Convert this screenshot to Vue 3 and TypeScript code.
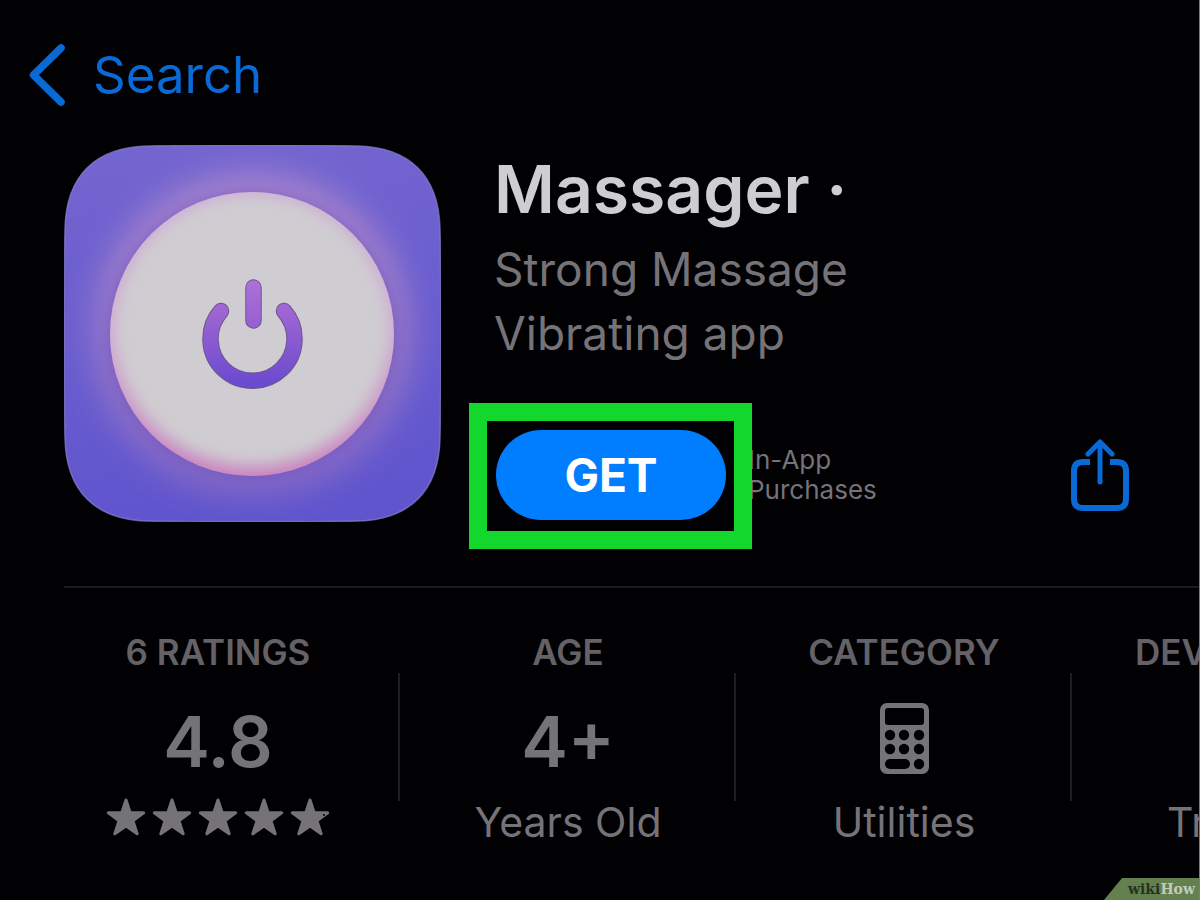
<script setup lang="ts">
const stars: number[] = [1, 2, 3, 4, 5]
const keys: { x: number; y: number }[] = [
  { x: 10, y: 32 }, { x: 24, y: 32 }, { x: 39, y: 32 },
  { x: 10, y: 46 }, { x: 24, y: 46 }, { x: 39, y: 46 },
  { x: 39, y: 61 },
]
</script>

<template>
  <main class="page">
    <nav class="nav">
      <a class="back" href="#search">
        <svg class="chevron" viewBox="0 0 38 64" aria-hidden="true">
          <path d="M33 6 5.500 33 33 60" fill="none" stroke="currentColor" stroke-width="7.500" stroke-linecap="round" stroke-linejoin="round" />
        </svg>
        <span>Search</span>
      </a>
    </nav>

    <section class="hero">
      <svg class="app-icon" viewBox="0 0 377 377" role="img" aria-label="Massager icon">
        <defs>
          <linearGradient id="base" x1="0" y1="0" x2="0.1" y2="1">
            <stop offset="0" stop-color="#7466cf" />
            <stop offset="0.5" stop-color="#695dd0" />
            <stop offset="1" stop-color="#6055cd" />
          </linearGradient>
          <linearGradient id="halo" x1="0" y1="0" x2="0" y2="1">
            <stop offset="0" stop-color="#a583ce" />
            <stop offset="0.5" stop-color="#9375c8" />
            <stop offset="1" stop-color="#8467c6" />
          </linearGradient>
          <linearGradient id="rim" x1="0" y1="0" x2="0" y2="1">
            <stop offset="0" stop-color="#cda8d6" />
            <stop offset="0.5" stop-color="#d0a6d2" />
            <stop offset="1" stop-color="#c981be" />
          </linearGradient>
          <linearGradient id="power" gradientUnits="userSpaceOnUse" x1="0" y1="134" x2="0" y2="243">
            <stop offset="0" stop-color="#ad72d6" />
            <stop offset="0.35" stop-color="#9b63d2" />
            <stop offset="1" stop-color="#6849cf" />
          </linearGradient>
          <filter id="soft" x="-25%" y="-25%" width="150%" height="150%"><feGaussianBlur stdDeviation="15" /></filter>
          <filter id="face" x="-20%" y="-20%" width="140%" height="140%"><feGaussianBlur stdDeviation="8" /></filter>
          <filter id="shade" x="-20%" y="-20%" width="140%" height="140%"><feGaussianBlur stdDeviation="5" /></filter>
          <clipPath id="tile"><path d="M84 1C124 0 253 0 293 1C346 2 375 31 376 84C377 124 377 253 376 293C375 346 346 375 293 376C253 377 124 377 84 376C31 375 2 346 1 293C0 253 0 124 1 84C2 31 31 2 84 1Z" /></clipPath>
          <clipPath id="disc"><circle cx="188" cy="189" r="142" /></clipPath>
        </defs>
        <g clip-path="url(#tile)">
          <rect width="377" height="377" fill="url(#base)" />
          <circle cx="188" cy="189" r="162" fill="url(#halo)" filter="url(#soft)" />
          <circle cx="188" cy="191" r="145" fill="#7459c0" opacity="0.6" filter="url(#shade)" />
          <circle cx="188" cy="189" r="142" fill="url(#rim)" />
          <g clip-path="url(#disc)">
            <ellipse cx="188" cy="185" rx="138" ry="136" fill="#cfcdd1" filter="url(#face)" />
          </g>
        </g>
        <path d="M84 1C124 0 253 0 293 1C346 2 375 31 376 84C377 124 377 253 376 293C375 346 346 375 293 376C253 377 124 377 84 376C31 375 2 346 1 293C0 253 0 124 1 84C2 31 31 2 84 1Z" fill="none" stroke="#8a7fd0" stroke-width="1.500" opacity="0.7" />
        <g fill="none" stroke-linecap="round">
          <path d="M157 166A42 42 0 1 0 220 166M189.500 142.500V175.500" stroke="#6d558f" stroke-width="16.500" />
          <path d="M157 166A42 42 0 1 0 220 166M189.500 142.500V175.500" stroke="url(#power)" stroke-width="14.500" />
        </g>
      </svg>

      <div class="info">
        <h1 class="title">Massager ·</h1>
        <p class="subtitle">Strong Massage<br />Vibrating app</p>
        <div class="actions">
          <div class="get-wrap">
            <button class="get" type="button">GET</button>
            <span class="highlight" aria-hidden="true"></span>
          </div>
          <p class="iap">In-App<br />Purchases</p>
          <button class="share" type="button" aria-label="Share">
            <svg viewBox="0 0 58 72" aria-hidden="true">
              <g fill="none" stroke="currentColor" stroke-width="6">
                <path d="M19 23H12Q3 23 3 32V60Q3 69 12 69H46Q55 69 55 60V32Q55 23 46 23H39" />
                <path d="M29 43V4M17 15 29 3 41 15" stroke-width="5" stroke-linecap="round" stroke-linejoin="round" />
              </g>
            </svg>
          </button>
        </div>
      </div>
    </section>

    <section class="stats">
      <div class="stat">
        <h2 class="label">6 RATINGS</h2>
        <p class="value">4.8</p>
        <div class="stars" role="img" aria-label="5 stars">
          <svg v-for="s in stars" :key="s" viewBox="0 0 40 38" aria-hidden="true">
            <path d="M20 2 24.200 14.700 37.700 14.800 26.900 22.800 31.200 35.800 20 28 8.800 35.800 13.100 22.800 2.300 14.800 15.800 14.700Z" fill="currentColor" stroke="currentColor" stroke-width="3" stroke-linejoin="round" />
            <circle v-if="s === 5" cx="34" cy="17" r="1" fill="#010003" />
          </svg>
        </div>
      </div>
      <div class="stat">
        <h2 class="label">AGE</h2>
        <p class="value">4+</p>
        <p class="note">Years Old</p>
      </div>
      <div class="stat">
        <h2 class="label">CATEGORY</h2>
        <div class="value value-icon">
          <svg class="calculator" viewBox="0 0 49 71" role="img" aria-label="Calculator">
            <rect width="49" height="71" rx="7" fill="currentColor" />
            <g fill="#010003">
              <rect x="5" y="5" width="39" height="17" rx="3" />
              <circle v-for="(k, i) in keys" :key="i" :cx="k.x" :cy="k.y" r="5.200" />
              <rect x="5" y="56" width="25" height="10" rx="5" />
            </g>
          </svg>
        </div>
        <p class="note">Utilities</p>
      </div>
      <div class="stat stat-cut">
        <h2 class="label">DEVELOPER</h2>
        <div class="value"></div>
        <p class="note">Tr</p>
      </div>
    </section>

    <div class="badge"><span class="wiki">wiki</span><span class="how">How</span></div>
  </main>
</template>

<style>
body {
  margin: 0;
  background: #010003;
}
</style>

<style scoped>
.page {
  position: relative;
  box-sizing: border-box;
  min-height: 100vh;
  overflow: hidden;
  border-right: 1px solid #7c7c7c;
  background: #010003;
  color: #757378;
  font-family: Inter, "Liberation Sans", sans-serif;
}
h1, h2, p {
  margin: 0;
}
button {
  padding: 0;
  border: 0;
  font-family: inherit;
  cursor: pointer;
}
.nav {
  padding: 42px 28px 0;
}
.back {
  display: inline-flex;
  align-items: center;
  gap: 27px;
  height: 64px;
  color: #0969d5;
  font-size: 51px;
  text-decoration: none;
}
.chevron {
  width: 38px;
  height: 64px;
}
.hero {
  display: flex;
  gap: 53px;
  margin-left: 64px;
  padding: 35px 0 64px;
  border-bottom: 2px solid #1b1a1d;
}
.app-icon {
  flex: none;
  width: 377px;
  height: 377px;
}
.info {
  flex: 1;
  min-width: 0;
}
.title {
  color: #cfcdd1;
  font-size: 66px;
  font-weight: 600;
  line-height: 88px;
}
.subtitle {
  margin-top: 4px;
  font-size: 46px;
  line-height: 64px;
}
.actions {
  display: flex;
  align-items: center;
  margin-top: 65px;
  padding: 0 70px 0 2px;
}
.get-wrap {
  position: relative;
  flex: none;
}
.get {
  display: block;
  width: 230px;
  height: 90px;
  border-radius: 45px;
  background: #007eff;
  color: #fff;
  font-size: 46px;
  font-weight: 700;
}
.highlight {
  position: absolute;
  inset: -27px -26px -29px -27px;
  border: 18px solid #13d72c;
  pointer-events: none;
}
.iap {
  margin-left: 22px;
  font-size: 26px;
  line-height: 30px;
}
.share {
  width: 58px;
  height: 72px;
  margin-left: auto;
  background: none;
  color: #0969d5;
}
.share svg {
  display: block;
}
.stats {
  display: grid;
  grid-template-columns: calc(30vw + 4px) 28vw 28vw 28vw;
  margin-left: 36px;
  padding-top: 42px;
}
.stat {
  display: flex;
  flex-direction: column;
  align-items: center;
  background: linear-gradient(#1f1e21, #1f1e21) right 0 top 43px / 2px 128px no-repeat;
}
.label {
  color: #646267;
  font-size: 35px;
  font-weight: 600;
  line-height: 44px;
}
.value {
  display: flex;
  align-items: center;
  height: 80px;
  margin-top: 27px;
  font-size: 70px;
  font-weight: 600;
}
.value-icon {
  align-items: flex-start;
}
.calculator {
  width: 49px;
  height: 71px;
  margin-top: 2px;
}
.stars {
  display: flex;
  gap: 6px;
  margin-top: 17px;
}
.stars svg {
  width: 40px;
  height: 38px;
}
.note {
  margin-top: 17px;
  font-size: 41px;
  line-height: 48px;
}
.stat-cut {
  align-items: flex-start;
  padding-left: 63px;
}
.stat-cut .note {
  margin-left: 32px;
}
.badge {
  position: absolute;
  right: 0;
  bottom: 0;
  box-sizing: border-box;
  width: 95px;
  height: 22px;
  padding-right: 4px;
  background: #65804f;
  clip-path: polygon(18px 0, 100% 0, 100% 100%, 0 100%);
  font-family: "DejaVu Serif", serif;
  font-size: 14px;
  font-weight: 700;
  line-height: 22px;
  text-align: right;
}
.wiki {
  color: #27331f;
}
.how {
  color: #c3cbbd;
}
</style>
